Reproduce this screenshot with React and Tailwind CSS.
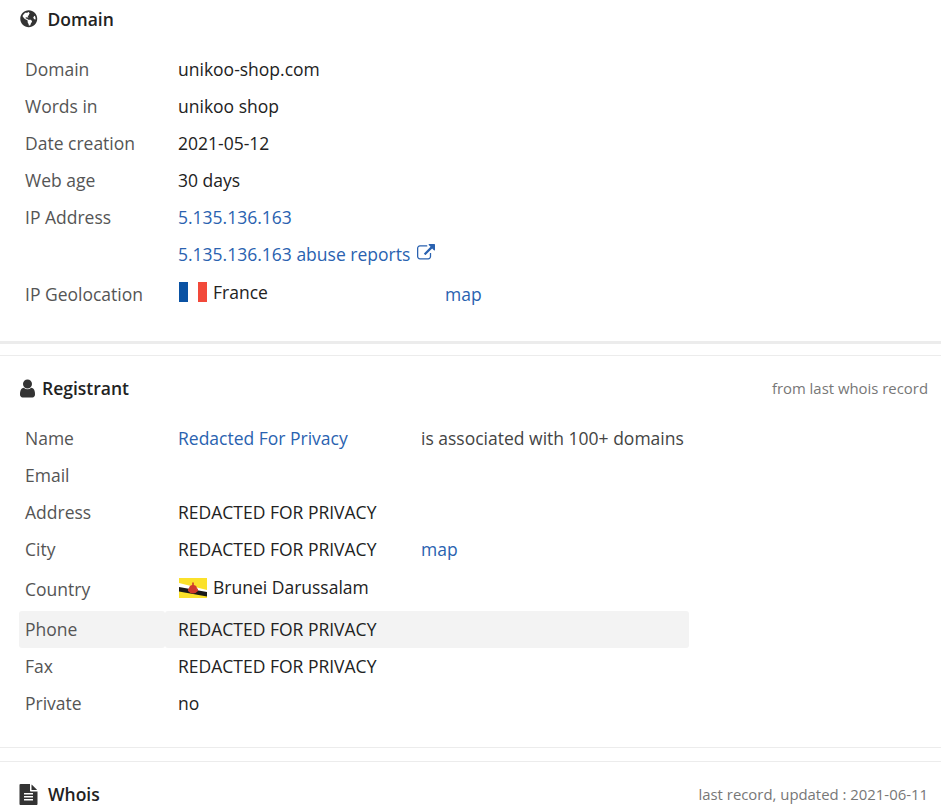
import { FaGlobeAmericas } from "react-icons/fa"

const UserIcon = () => (
  <svg width="21" height="21" viewBox="0 0 1792 1792" fill="#333" className="mr-[4px] -ml-[3px]">
    <path d="M1536 1399q0 109-62.5 187t-150.5 78h-854q-88 0-150.5-78t-62.5-187q0-85 8.5-160.5t31.5-152 58.5-131 94-89 134.5-34.5q131 128 313 128t313-128q76 0 134.5 34.5t94 89 58.5 131 31.5 152 8.5 160.5zm-256-887q0 159-112.5 271.5t-271.5 112.5-271.5-112.5-112.5-271.5 112.5-271.5 271.5-112.5 271.5 112.5 112.5 271.5z" />
  </svg>
)

const FileIcon = () => (
  <svg width="21" height="21" viewBox="0 0 1792 1792" fill="#333" className="mr-[9px] -ml-[2px]">
    <path d="M1596 476q14 14 28 36h-472v-472q22 14 36 28zm-476 164h544v1056q0 40-28 68t-68 28h-1344q-40 0-68-28t-28-68v-1600q0-40 28-68t68-28h800v544q0 40 28 68t68 28zm160 736v-64q0-14-9-23t-23-9h-704q-14 0-23 9t-9 23v64q0 14 9 23t23 9h704q14 0 23-9t9-23zm0-256v-64q0-14-9-23t-23-9h-704q-14 0-23 9t-9 23v64q0 14 9 23t23 9h704q14 0 23-9t9-23zm0-256v-64q0-14-9-23t-23-9h-704q-14 0-23 9t-9 23v64q0 14 9 23t23 9h704q14 0 23-9t9-23z" />
  </svg>
)

const ExternalIcon = () => (
  <svg width="18" height="18" viewBox="0 0 1792 1792" fill="#2a62b0" className="ml-[7px] mb-[3px]">
    <path d="M1408 928v320q0 119-84.5 203.5t-203.5 84.5h-832q-119 0-203.5-84.5t-84.5-203.5v-832q0-119 84.5-203.5t203.5-84.5h704q14 0 23 9t9 23v64q0 14-9 23t-23 9h-704q-66 0-113 47t-47 113v832q0 66 47 113t113 47h832q66 0 113-47t47-113v-320q0-14 9-23t23-9h64q14 0 23 9t9 23zm384-864v512q0 26-19 45t-45 19-45-19l-176-176-652 652q-10 10-23 10t-23-10l-114-114q-10-10-10-23t10-23l652-652-176-176q-19-19-19-45t19-45 45-19h512q26 0 45 19t19 45z" />
  </svg>
)

const FranceFlag = () => (
  <svg width="28" height="20" viewBox="0 0 28 20" className="shrink-0 ml-px">
    <rect width="9" height="20" fill="#0a52a3" />
    <rect x="9" width="10" height="20" fill="#ffffff" />
    <rect x="19" width="9" height="20" fill="#f2493a" />
  </svg>
)

const BruneiFlag = () => (
  <svg width="28" height="20" viewBox="0 0 28 20" className="shrink-0 ml-px">
    <rect width="28" height="20" fill="#fbe12b" />
    <polygon points="0,5 0,10 28,17 28,12" fill="#ffffff" />
    <polygon points="0,9 0,13.5 28,18.5 28,14" fill="#1a1a1a" />
    <circle cx="14" cy="11" r="4" fill="#cf3a2c" />
    <rect x="13.2" y="4.5" width="1.6" height="4" fill="#cf3a2c" />
    <path d="M9 10 Q14 18 19 10 L19 13 Q14 18 9 13 Z" fill="#cf3a2c" />
  </svg>
)

const Row = ({ label, children, className = "h-[37px]" }) => (
  <div className={`flex items-center pl-[25px] ${className}`}>
    <div className="w-[153px] shrink-0 text-[#555]">{label}</div>
    <div className="flex items-center text-[#222]">{children}</div>
  </div>
)

const Link = ({ children, className = "" }) => (
  <a className={`text-[#2a62b0] ${className}`}>{children}</a>
)

const Divider = ({ thick }) => (
  <div className={`bg-[#ececec] ${thick ? "h-[3px]" : "h-px"}`} />
)

export default function App() {
  return (
    <div className="w-[941px] h-[807px] overflow-hidden bg-white text-[17.5px] leading-[25px] font-['Open_Sans',sans-serif]">
      <div className="flex items-center h-[38px] pl-[20px]">
        <FaGlobeAmericas className="text-[#333] text-[17.5px] mr-[10px]" />
        <h2 className="font-semibold text-[#222]">Domain</h2>
      </div>

      <div className="mt-[13px]">
        <Row label="Domain">unikoo-shop.com</Row>
        <Row label="Words in">unikoo shop</Row>
        <Row label="Date creation">2021-05-12</Row>
        <Row label="Web age">30 days</Row>
        <Row label="IP Address"><Link>5.135.136.163</Link></Row>
        <Row label="">
          <Link>5.135.136.163 abuse reports</Link>
          <ExternalIcon />
        </Row>
        <Row label="IP Geolocation" className="h-[41px] pt-px">
          <span className="flex items-center w-[267px] -mt-[4px]">
            <FranceFlag />
            <span className="ml-[6px]">France</span>
          </span>
          <Link>map</Link>
        </Row>
      </div>

      <div className="mt-[27px]"><Divider thick /></div>
      <div className="mt-[11px]"><Divider /></div>

      <div className="flex items-center justify-between h-[65px] pl-[20px] pr-[13px]">
        <div className="flex items-center">
          <UserIcon />
          <h2 className="font-semibold text-[#222]">Registrant</h2>
        </div>
        <span className="text-[14.9px] text-[#777]">from last whois record</span>
      </div>

      <div className="-mt-px">
        <Row label="Name">
          <span className="w-[243px]"><Link>Redacted For Privacy</Link></span>
          <span className="text-[#444]">is associated with 100+ domains</span>
        </Row>
        <Row label="Email" />
        <Row label="Address">REDACTED FOR PRIVACY</Row>
        <Row label="City">
          <span className="w-[243px]">REDACTED FOR PRIVACY</span>
          <Link>map</Link>
        </Row>
        <Row label="Country" className="h-[43px]">
          <span className="flex items-center -mt-[3px]">
            <BruneiFlag />
            <span className="ml-[6px] -mt-px">Brunei Darussalam</span>
          </span>
        </Row>
        <div className="flex h-[37px] w-[670px] ml-[19px] items-center">
          <div className="flex items-center h-full w-[146px] pl-[6px] rounded-[3px] bg-[#f3f3f3] text-[#555]">Phone</div>
          <div className="flex items-center h-full flex-1 pl-[13px] rounded-[3px] bg-[#f3f3f3] text-[#222]">REDACTED FOR PRIVACY</div>
        </div>
        <Row label="Fax">REDACTED FOR PRIVACY</Row>
        <Row label="Private">no</Row>
      </div>

      <div className="mt-[25px]"><Divider /></div>
      <div className="mt-[13px]"><Divider /></div>

      <div className="flex items-center justify-between h-[65px] pl-[20px] pr-[13px]">
        <div className="flex items-center">
          <FileIcon />
          <h2 className="font-semibold text-[#222]">Whois</h2>
        </div>
        <span className="text-[14.9px] text-[#777]">last record, updated : 2021-06-11</span>
      </div>
    </div>
  )
}
